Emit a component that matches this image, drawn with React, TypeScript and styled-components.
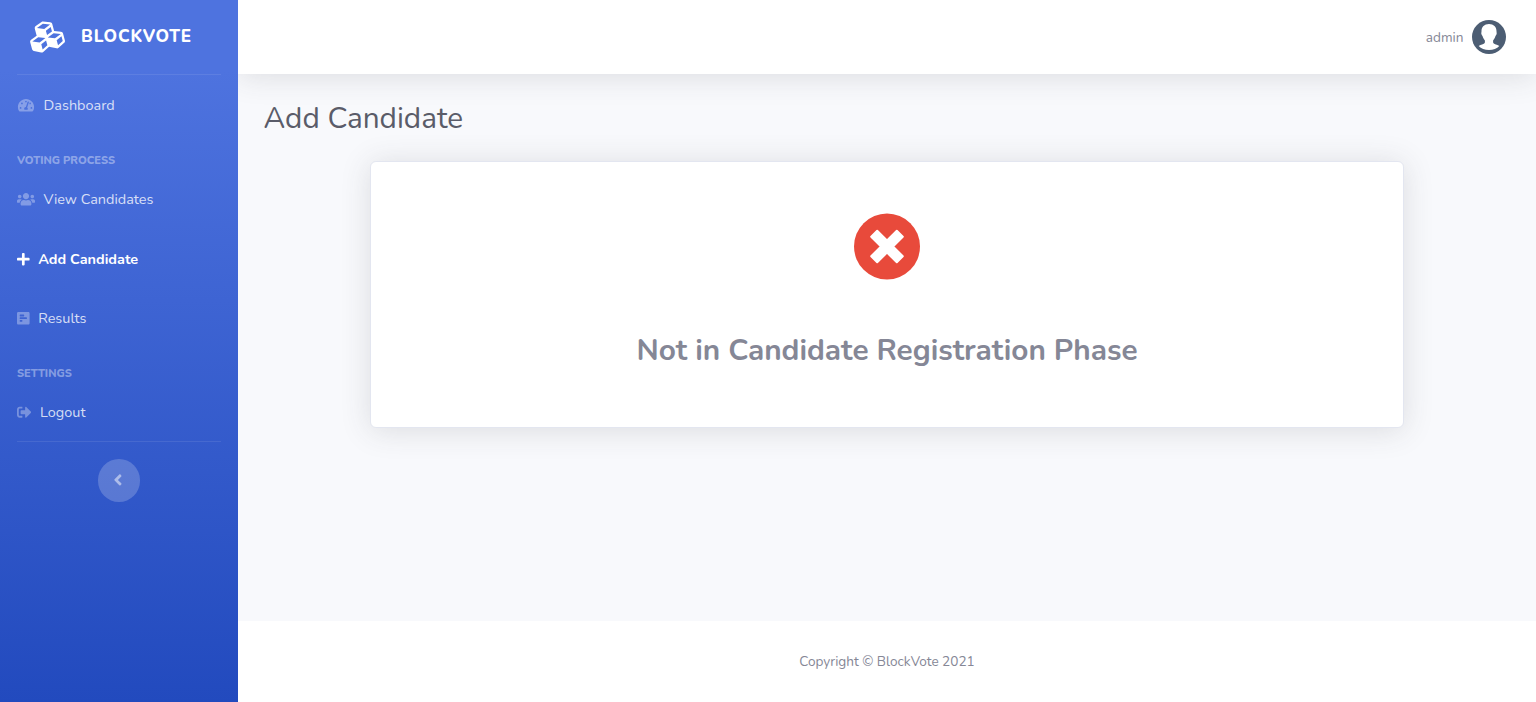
import React from "react";
import styled, { createGlobalStyle } from "styled-components";
import {
  FaAngleLeft,
  FaCubes,
  FaPlus,
  FaPoll,
  FaSignOutAlt,
  FaTachometerAlt,
  FaUsers,
} from "react-icons/fa";

const GlobalStyle = createGlobalStyle`
  html { font-size: 17px; }
  *, *::before, *::after { box-sizing: border-box; }
  body {
    margin: 0;
    font-family: Nunito, "Open Sans", sans-serif;
    font-size: 1rem;
    line-height: 1.5;
    color: #858796;
    background: #fff;
  }
  h1, h3 { margin: 0; padding: 0; }
`;

const Page = styled.div`
  display: flex;
  min-height: 100vh;
`;

const Sidebar = styled.nav`
  position: relative;
  z-index: 1;
  width: 14rem;
  flex: none;
  display: flex;
  flex-direction: column;
  background: #4e73df linear-gradient(180deg, #4e73df 10%, #224abe 100%);
`;

const Brand = styled.a`
  height: 4.375rem;
  display: flex;
  align-items: center;
  justify-content: center;
  padding: 0 21px 3px 1rem;
  color: #fff;
  font-weight: 800;
  letter-spacing: 0.05rem;
  text-transform: uppercase;
`;

const BrandIcon = styled(FaCubes)`
  width: 2.25rem;
  height: 2rem;
  transform: rotate(-15deg);
`;

const BrandText = styled.span`
  margin: 3px 0.9rem 0 16px;
`;

const Divider = styled.hr`
  width: calc(100% - 2rem);
  margin: 0 1rem;
  border: 0;
  border-top: 1px solid rgba(255, 255, 255, 0.09);
`;

const Section = styled.div`
  height: 17.6px;
  margin-top: 1rem;
  padding: 1px 1rem 0;
  font-size: 0.65rem;
  font-weight: 800;
  line-height: 16.6px;
  text-transform: uppercase;
  color: rgba(255, 255, 255, 0.4);
`;

const NavLink = styled.a<{ $active?: boolean }>`
  height: 3.5rem;
  padding: 0 1rem;
  display: flex;
  align-items: center;
  font-size: 0.85rem;
  font-weight: ${(p) => (p.$active ? 700 : 400)};
  color: ${(p) => (p.$active ? "#fff" : "rgba(255, 255, 255, 0.8)")};
`;

const NavIcon = styled.span<{ $width: number; $active?: boolean; $quarterTurn?: boolean }>`
  display: flex;
  color: ${(p) => (p.$active ? "#fff" : "rgba(255, 255, 255, 0.33)")};

  svg {
    width: ${(p) => p.$width}px;
    height: 0.85rem;
    transform: ${(p) => (p.$quarterTurn ? "rotate(90deg)" : "none")};
  }
`;

const NavText = styled.span`
  margin-left: 8.6px;
  padding-top: 2px;
`;

const SidebarEnd = styled.div`
  margin-top: -1px;
  display: flex;
  flex-direction: column;
`;

const Toggle = styled.button`
  align-self: center;
  width: 2.5rem;
  height: 2.5rem;
  margin-top: 1rem;
  padding: 0 2px 1px 0;
  border: 0;
  border-radius: 50%;
  display: flex;
  align-items: center;
  justify-content: center;
  background: rgba(255, 255, 255, 0.2);
  color: rgba(255, 255, 255, 0.5);
  font-size: 1.05rem;
`;

const Main = styled.div`
  flex: 1;
  display: flex;
  flex-direction: column;
  background: #f8f9fc;
`;

const Topbar = styled.header`
  height: 4.375rem;
  flex: none;
  display: flex;
  align-items: center;
  justify-content: flex-end;
  padding-right: 30px;
  background: #fff;
  box-shadow: 0 0.15rem 1.75rem 0 rgba(58, 59, 69, 0.15);
`;

const UserName = styled.span`
  margin-right: 0.5rem;
  padding-top: 2px;
  font-size: 0.8rem;
`;

const Content = styled.main`
  flex: 1;
  padding: 26.5px 1.5rem 0;
`;

const Title = styled.h1`
  font-size: 1.75rem;
  font-weight: 400;
  line-height: 1.2;
  color: #5a5c69;
`;

const Card = styled.section`
  width: 1034px;
  height: 267px;
  margin: 24.5px auto 0;
  padding-top: 51px;
  display: flex;
  flex-direction: column;
  align-items: center;
  background: #fff;
  border: 1px solid #e3e6f0;
  border-radius: 0.35rem;
  box-shadow: 0 0.15rem 1.75rem 0 rgba(58, 59, 69, 0.15);
`;

const Message = styled.h3`
  margin-top: 53px;
  font-size: 1.75rem;
  font-weight: 700;
  line-height: 1.2;
`;

const Footer = styled.footer`
  height: 81px;
  padding-top: 2rem;
  text-align: center;
  font-size: 0.8rem;
  line-height: 1;
  background: #fff;
`;

const Avatar = () => (
  <svg width="34" height="34" viewBox="0 0 34 34">
    <circle cx="17" cy="17" r="17" fill="#4c5d73" />
    <path
      fill="#fff"
      d="M17 4c4.600 0 7.500 3 7.500 7.300 0 1.300.400 1.500.100 2.700-.300 1.100-.900 1.200-1.200 2.300-.500 1.900-1.300 3-2.300 4.100v1.600c0 2 2.600 2.200 6.200 3.900C25 28.500 21.200 30 17 30S9 28.500 6.700 25.900c3.600-1.700 6.200-1.900 6.200-3.900v-1.600c-1-1.100-1.800-2.200-2.300-4.100-.300-1.100-.900-1.200-1.200-2.300-.300-1.200.100-1.400.100-2.700C9.500 7 12.400 4 17 4Z"
    />
  </svg>
);

const ErrorMark = () => (
  <svg width="66" height="67" viewBox="0.5 0 66 67">
    <circle cx="33.500" cy="33.500" r="33" fill="#e84a3b" />
    <path
      fill="#fff"
      stroke="#fff"
      strokeWidth="2"
      strokeLinejoin="round"
      d="M23.700 17.700 33.500 27.400 43.300 17.700 49.300 23.700 39.500 33.500 49.300 43.300 43.300 49.300 33.500 39.600 23.700 49.300 17.700 43.300 27.500 33.500 17.700 23.700Z"
    />
  </svg>
);

type ItemProps = {
  icon: React.ReactNode;
  width: number;
  label: string;
  active?: boolean;
  quarterTurn?: boolean;
};

const NavItem = ({ icon, width, label, active, quarterTurn }: ItemProps) => (
  <NavLink $active={active}>
    <NavIcon $width={width} $active={active} $quarterTurn={quarterTurn}>
      {icon}
    </NavIcon>
    <NavText>{label}</NavText>
  </NavLink>
);

export default function App() {
  return (
    <>
      <GlobalStyle />
      <Page>
        <Sidebar>
          <Brand>
            <BrandIcon />
            <BrandText>BlockVote</BrandText>
          </Brand>
          <Divider />
          <NavItem icon={<FaTachometerAlt />} width={18} label="Dashboard" />
          <Section>Voting Process</Section>
          <NavItem icon={<FaUsers />} width={18} label="View Candidates" />
          <NavItem icon={<FaPlus />} width={12.6} label="Add Candidate" active />
          <NavItem icon={<FaPoll />} width={12.6} label="Results" quarterTurn />
          <Section>Settings</Section>
          <NavItem icon={<FaSignOutAlt />} width={14.45} label="Logout" />
          <SidebarEnd>
            <Divider />
            <Toggle aria-label="Collapse sidebar">
              <FaAngleLeft />
            </Toggle>
          </SidebarEnd>
        </Sidebar>
        <Main>
          <Topbar>
            <UserName>admin</UserName>
            <Avatar />
          </Topbar>
          <Content>
            <Title>Add Candidate</Title>
            <Card>
              <ErrorMark />
              <Message>Not in Candidate Registration Phase</Message>
            </Card>
          </Content>
          <Footer>Copyright © BlockVote 2021</Footer>
        </Main>
      </Page>
    </>
  );
}
